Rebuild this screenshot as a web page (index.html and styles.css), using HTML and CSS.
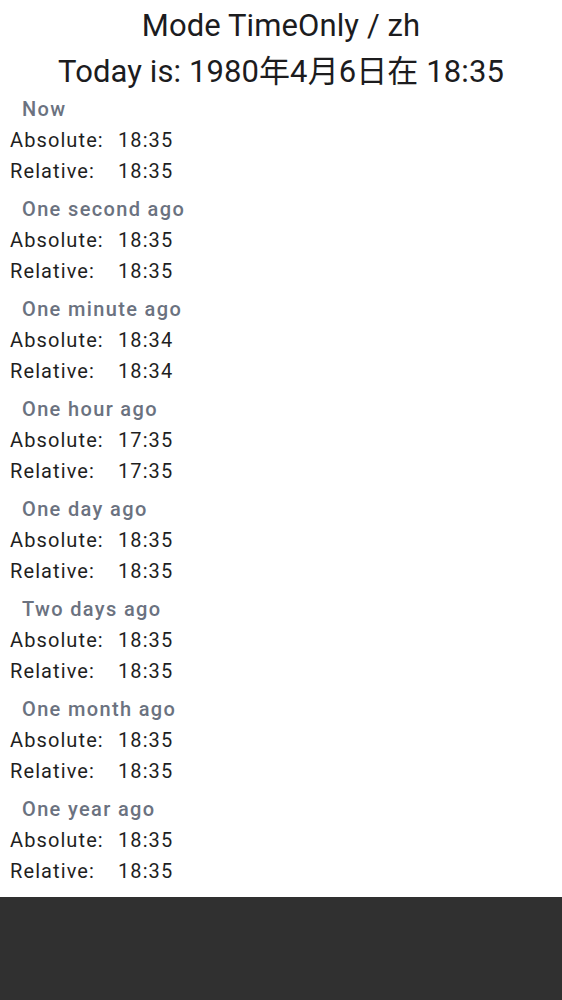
FILE: index.html
```html
<!DOCTYPE html>
<html lang="en">
<head>
<meta charset="utf-8">
<title>Mode TimeOnly / zh</title>
<link rel="stylesheet" href="styles.css">
</head>
<body>
<main class="page">
  <h1 class="title">Mode TimeOnly / zh<br>Today is: 1980年4月6日在 18:35</h1>
  <div class="list">
    <section class="case">
      <h2 class="case-title">Now</h2>
      <div class="row"><span class="label">Absolute:</span><span class="value">18:35</span></div>
      <div class="row"><span class="label">Relative:</span><span class="value">18:35</span></div>
    </section>
    <section class="case">
      <h2 class="case-title">One second ago</h2>
      <div class="row"><span class="label">Absolute:</span><span class="value">18:35</span></div>
      <div class="row"><span class="label">Relative:</span><span class="value">18:35</span></div>
    </section>
    <section class="case">
      <h2 class="case-title">One minute ago</h2>
      <div class="row"><span class="label">Absolute:</span><span class="value">18:34</span></div>
      <div class="row"><span class="label">Relative:</span><span class="value">18:34</span></div>
    </section>
    <section class="case">
      <h2 class="case-title">One hour ago</h2>
      <div class="row"><span class="label">Absolute:</span><span class="value">17:35</span></div>
      <div class="row"><span class="label">Relative:</span><span class="value">17:35</span></div>
    </section>
    <section class="case">
      <h2 class="case-title">One day ago</h2>
      <div class="row"><span class="label">Absolute:</span><span class="value">18:35</span></div>
      <div class="row"><span class="label">Relative:</span><span class="value">18:35</span></div>
    </section>
    <section class="case">
      <h2 class="case-title">Two days ago</h2>
      <div class="row"><span class="label">Absolute:</span><span class="value">18:35</span></div>
      <div class="row"><span class="label">Relative:</span><span class="value">18:35</span></div>
    </section>
    <section class="case">
      <h2 class="case-title">One month ago</h2>
      <div class="row"><span class="label">Absolute:</span><span class="value">18:35</span></div>
      <div class="row"><span class="label">Relative:</span><span class="value">18:35</span></div>
    </section>
    <section class="case">
      <h2 class="case-title">One year ago</h2>
      <div class="row"><span class="label">Absolute:</span><span class="value">18:35</span></div>
      <div class="row"><span class="label">Relative:</span><span class="value">18:35</span></div>
    </section>
  </div>
</main>
</body>
</html>
```
FILE: styles.css
```css
html, body {
  margin: 0;
  padding: 0;
}
body {
  background: #303030;
  font-family: Roboto, "Noto Sans CJK SC", sans-serif;
  color: #1f1f1f;
}
.page {
  background: #ffffff;
  padding: 3px 10px 10px;
}
.title {
  margin: 0;
  font-size: 31px;
  font-weight: 400;
  line-height: 45.5px;
  letter-spacing: 0.1px;
  text-align: center;
  color: #1c1c1e;
}
.list {
  display: flex;
  flex-direction: column;
  gap: 7px;
}
.case {
  display: flex;
  flex-direction: column;
}
.case-title {
  margin: 0;
  padding-left: 12px;
  font-size: 20px;
  font-weight: 500;
  line-height: 31px;
  letter-spacing: 1.35px;
  color: #6b7280;
}
.row {
  display: grid;
  grid-template-columns: 108px auto;
  font-size: 20px;
  line-height: 31px;
  letter-spacing: 1.1px;
}
```
